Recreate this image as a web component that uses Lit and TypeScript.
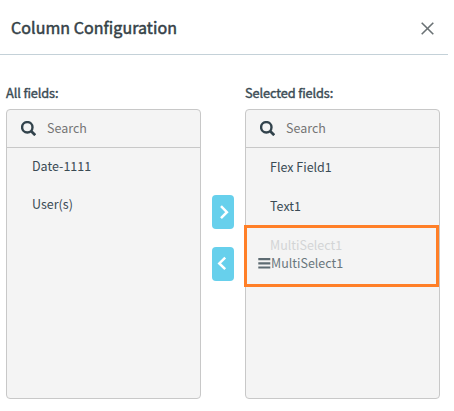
import { LitElement, html, css, svg } from "lit";
import { customElement, property } from "lit/decorators.js";

@customElement("field-panel")
class FieldPanel extends LitElement {
  @property() label = "";

  static styles = css`
    :host { display: block; width: 195px; }
    .label { height: 20px; line-height: 20px; font-size: 12.8px; font-weight: 400; -webkit-text-stroke: 0.4px #3a4b54; color: #3a4b54; letter-spacing: -0.13px; margin-bottom: 6px; white-space: nowrap; }
    .box { box-sizing: border-box; height: 290px; border: 1px solid #c8c8c8; border-radius: 4px; background: #f4f4f4; }
    .search { box-sizing: border-box; height: 38px; border-bottom: 1px solid #c8c8c8; display: flex; align-items: center; padding: 0 0 1px 14px; gap: 11px; font-size: 12.5px; line-height: 20px; color: #757575; }
    .search span { margin-top: -1px; }
    .search svg { margin-top: 1px; }
    svg { display: block; }
  `;

  render() {
    return html`
      <div class="label">${this.label}</div>
      <div class="box">
        <div class="search">
          <svg width="15" height="15" viewBox="0 0 15 15" fill="none" stroke="#32434c">
            <circle cx="6.3" cy="6.3" r="5.2" stroke-width="2.4" />
            <path d="M10 10L14.2 14.2" stroke-width="2.7" />
          </svg>
          <span>Search</span>
        </div>
        <slot></slot>
      </div>
    `;
  }
}

@customElement("app-root")
class AppRoot extends LitElement {
  static styles = css`
    :host { display: block; width: 454px; height: 411px; overflow: hidden; background: #fff; font-family: "Noto Sans CJK SC", "Noto Sans", sans-serif; color: #3a4b54; }
    .header { box-sizing: border-box; width: 448px; height: 55px; border-bottom: 1px solid #c4d1d8; display: flex; align-items: center; justify-content: space-between; padding: 2px 14px 0 11px; }
    .title { font-size: 16px; font-weight: 400; line-height: 24px; letter-spacing: 0.06px; -webkit-text-stroke: 0.5px #354147; color: #354147; white-space: nowrap; margin-top: -2px; }
    svg { display: block; }
    .body { display: flex; padding: 28px 0 0 6px; }
    .moves { width: 44px; display: flex; flex-direction: column; align-items: center; gap: 18px; padding-top: 112px; box-sizing: border-box; }
    .move { width: 22px; height: 34px; border-radius: 4px; background: #67d0ec; display: flex; align-items: center; justify-content: center; }
    .list { font-size: 12.5px; line-height: 20px; display: flex; flex-direction: column; gap: 18px; padding: 8px 0 0 25px; white-space: nowrap; }
    .list.selected { gap: 19px; padding: 9px 0 0 24px; }
    .item { height: 20px; }
    .anchor { position: relative; }
    .ghost { color: #d3d5d6; }
    .frame { position: absolute; left: -26px; top: -10px; width: 195px; height: 62px; box-sizing: border-box; border: 3px solid #ff7f27; }
    .dragged { position: absolute; left: -12px; top: 18px; display: flex; align-items: center; color: #6a777d; }
  `;

  chevron(d: string) {
    return html`<svg width="12" height="16" viewBox="0 0 12 16" fill="none" stroke="#fff" stroke-width="2.5">${svg`<path d=${d} />`}</svg>`;
  }

  render() {
    return html`
      <div class="header">
        <div class="title">Column Configuration</div>
        <svg width="13" height="13" viewBox="0 0 13 13" stroke="#6b7275" stroke-width="1.6">
          <path d="M.7 .7L12.3 12.3M12.3 .7L.7 12.3" />
        </svg>
      </div>
      <div class="body">
        <field-panel label="All fields:">
          <div class="list">
            <div class="item">Date-1111</div>
            <div class="item">User(s)</div>
          </div>
        </field-panel>
        <div class="moves">
          <div class="move">${this.chevron("M4 2.2L9.9 8.2L4 14.2")}</div>
          <div class="move">${this.chevron("M8.2 1.6L2.3 7.4L8.2 13.2")}</div>
        </div>
        <field-panel label="Selected fields:">
          <div class="list selected">
            <div class="item">Flex Field1</div>
            <div class="item">Text1</div>
            <div class="item anchor">
              <span class="ghost">MultiSelect1</span>
              <div class="frame"></div>
              <div class="dragged">
                <svg width="13" height="11" viewBox="0 0 13 11" fill="#5d6b72">
                  <path d="M.3 0h12v2.2h-12zM.3 4.2h12v2.2h-12zM.3 8.4h12v2.2h-12z" />
                </svg>
                <span>MultiSelect1</span>
              </div>
            </div>
          </div>
        </field-panel>
      </div>
    `;
  }
}
